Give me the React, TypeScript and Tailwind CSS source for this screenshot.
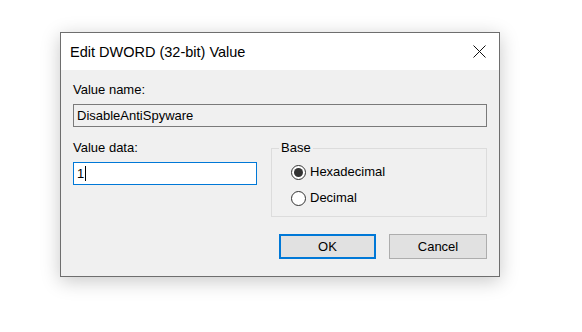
import React from 'react';

const Radio = ({ checked, label }: { checked?: boolean; label: string }) => (
  <label className="flex items-center h-[16px]">
    <span className="w-[15px] h-[15px] rounded-full border border-[#333333] bg-white flex items-center justify-center">
      {checked && <span className="w-[9px] h-[9px] rounded-full bg-[#333333]" />}
    </span>
    <span className="ml-[4px] text-black">{label}</span>
  </label>
);

const App = () => {
  return (
    <div
      className="min-h-screen bg-white pt-[32px] pl-[60px] text-[13px] leading-[16px] text-black"
      style={{ fontFamily: '"Liberation Sans", Arial, sans-serif' }}
    >
      <div className="w-[440px] h-[245px] border border-[#6e6e6e] bg-[#f0f0f0] shadow-[0_4px_18px_rgba(0,0,0,0.22)] flex flex-col">
        {/* Title bar */}
        <div className="h-[37px] bg-white flex items-center justify-between pl-[9px] pr-[13px]">
          <span className="text-[14.5px] leading-[18px] text-black">Edit DWORD (32-bit) Value</span>
          <svg width="13" height="13" viewBox="0 0 13 13" fill="none">
            <path d="M0.5 0.5L12.5 12.5M12.5 0.5L0.5 12.5" stroke="#111" strokeWidth="1" />
          </svg>
        </div>

        {/* Body */}
        <div className="flex-1 flex flex-col pt-[12px] pl-[12px] pr-[12px]">
          <div>Value name:</div>
          <div className="mt-[6px] h-[23px] border border-[#7a7a7a] bg-[#f0f0f0] flex items-center pl-[3px]">
            DisableAntiSpyware
          </div>

          <div className="flex mt-[13px]">
            <div className="w-[184px] flex flex-col">
              <div>Value data:</div>
              <div className="mt-[6px] h-[23px] border border-[#0078d7] bg-white flex items-center pl-[3px]">
                <span>1</span>
                <span className="w-[1px] h-[15px] bg-black ml-[1px]" />
              </div>
            </div>
            <fieldset className="ml-[14px] w-[216px] h-[77px] border border-[#dcdcdc] pl-[7px] pt-[8px]">
              <legend className="px-[2px]">Base</legend>
              <div className="flex flex-col gap-[10px] pl-[12px]">
                <Radio checked label="Hexadecimal" />
                <Radio label="Decimal" />
              </div>
            </fieldset>
          </div>

          <div className="flex justify-end gap-[13px] mt-[17px]">
            <button className="w-[97px] h-[25px] border-2 border-[#0078d7] bg-[#e1e1e1] text-black">OK</button>
            <button className="w-[98px] h-[25px] border border-[#adadad] bg-[#e1e1e1] text-black">Cancel</button>
          </div>
        </div>
      </div>
    </div>
  );
};

export default App;
